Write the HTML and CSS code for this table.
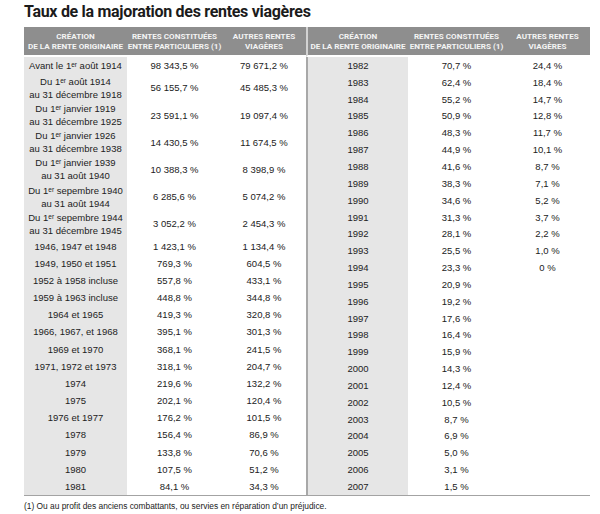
FILE: index.html
```html
<!DOCTYPE html>
<html lang="fr">
<head>
<meta charset="utf-8">
<link rel="stylesheet" href="styles.css">
</head>
<body>
<div class="page">
  <h1 class="title">Taux de la majoration des rentes viagères</h1>
  <div class="tables">
    <table class="tbl left">
      <colgroup><col class="w1"><col class="w2"><col class="w3"></colgroup>
      <thead>
        <tr><th>Création<br>de la rente originaire</th><th>Rentes constituées<br>entre particuliers (1)</th><th>Autres rentes<br>viagères</th></tr>
      </thead>
      <tbody>
        <tr class="s"><td class="c1">Avant le 1<span class="sup">er</span> août 1914</td><td>98 343,5 %</td><td>79 671,2 %</td></tr>
        <tr class="d"><td class="c1">Du 1<span class="sup">er</span> août 1914<br>au 31 décembre 1918</td><td>56 155,7 %</td><td>45 485,3 %</td></tr>
        <tr class="d"><td class="c1">Du 1<span class="sup">er</span> janvier 1919<br>au 31 décembre 1925</td><td>23 591,1 %</td><td>19 097,4 %</td></tr>
        <tr class="d"><td class="c1">Du 1<span class="sup">er</span> janvier 1926<br>au 31 décembre 1938</td><td>14 430,5 %</td><td>11 674,5 %</td></tr>
        <tr class="d"><td class="c1">Du 1<span class="sup">er</span> janvier 1939<br>au 31 août 1940</td><td>10 388,3 %</td><td>8 398,9 %</td></tr>
        <tr class="d"><td class="c1">Du 1<span class="sup">er</span> sepembre 1940<br>au 31 août 1944</td><td>6 285,6 %</td><td>5 074,2 %</td></tr>
        <tr class="d"><td class="c1">Du 1<span class="sup">er</span> sepembre 1944<br>au 31 décembre 1945</td><td>3 052,2 %</td><td>2 454,3 %</td></tr>
        <tr class="s"><td class="c1">1946, 1947 et 1948</td><td>1 423,1 %</td><td>1 134,4 %</td></tr>
        <tr class="s"><td class="c1">1949, 1950 et 1951</td><td>769,3 %</td><td>604,5 %</td></tr>
        <tr class="s"><td class="c1">1952 à 1958 incluse</td><td>557,8 %</td><td>433,1 %</td></tr>
        <tr class="s"><td class="c1">1959 à 1963 incluse</td><td>448,8 %</td><td>344,8 %</td></tr>
        <tr class="s"><td class="c1">1964 et 1965</td><td>419,3 %</td><td>320,8 %</td></tr>
        <tr class="s"><td class="c1">1966, 1967, et 1968</td><td>395,1 %</td><td>301,3 %</td></tr>
        <tr class="s"><td class="c1">1969 et 1970</td><td>368,1 %</td><td>241,5 %</td></tr>
        <tr class="s"><td class="c1">1971, 1972 et 1973</td><td>318,1 %</td><td>204,7 %</td></tr>
        <tr class="s"><td class="c1">1974</td><td>219,6 %</td><td>132,2 %</td></tr>
        <tr class="s"><td class="c1">1975</td><td>202,1 %</td><td>120,4 %</td></tr>
        <tr class="s"><td class="c1">1976 et 1977</td><td>176,2 %</td><td>101,5 %</td></tr>
        <tr class="s"><td class="c1">1978</td><td>156,4 %</td><td>86,9 %</td></tr>
        <tr class="s"><td class="c1">1979</td><td>133,8 %</td><td>70,6 %</td></tr>
        <tr class="s"><td class="c1">1980</td><td>107,5 %</td><td>51,2 %</td></tr>
        <tr class="s"><td class="c1">1981</td><td>84,1 %</td><td>34,3 %</td></tr>
      </tbody>
    </table>
    <table class="tbl right">
      <colgroup><col class="v1"><col class="v2"><col class="v3"></colgroup>
      <thead>
        <tr><th class="c1">Création<br>de la rente originaire</th><th>Rentes constituées<br>entre particuliers (1)</th><th>Autres rentes<br>viagères</th></tr>
      </thead>
      <tbody>
        <tr><td class="c1">1982</td><td>70,7 %</td><td>24,4 %</td></tr>
        <tr><td class="c1">1983</td><td>62,4 %</td><td>18,4 %</td></tr>
        <tr><td class="c1">1984</td><td>55,2 %</td><td>14,7 %</td></tr>
        <tr><td class="c1">1985</td><td>50,9 %</td><td>12,8 %</td></tr>
        <tr><td class="c1">1986</td><td>48,3 %</td><td>11,7 %</td></tr>
        <tr><td class="c1">1987</td><td>44,9 %</td><td>10,1 %</td></tr>
        <tr><td class="c1">1988</td><td>41,6 %</td><td>8,7 %</td></tr>
        <tr><td class="c1">1989</td><td>38,3 %</td><td>7,1 %</td></tr>
        <tr><td class="c1">1990</td><td>34,6 %</td><td>5,2 %</td></tr>
        <tr><td class="c1">1991</td><td>31,3 %</td><td>3,7 %</td></tr>
        <tr><td class="c1">1992</td><td>28,1 %</td><td>2,2 %</td></tr>
        <tr><td class="c1">1993</td><td>25,5 %</td><td>1,0 %</td></tr>
        <tr><td class="c1">1994</td><td>23,3 %</td><td>0 %</td></tr>
        <tr><td class="c1">1995</td><td>20,9 %</td><td></td></tr>
        <tr><td class="c1">1996</td><td>19,2 %</td><td></td></tr>
        <tr><td class="c1">1997</td><td>17,6 %</td><td></td></tr>
        <tr><td class="c1">1998</td><td>16,4 %</td><td></td></tr>
        <tr><td class="c1">1999</td><td>15,9 %</td><td></td></tr>
        <tr><td class="c1">2000</td><td>14,3 %</td><td></td></tr>
        <tr><td class="c1">2001</td><td>12,4 %</td><td></td></tr>
        <tr><td class="c1">2002</td><td>10,5 %</td><td></td></tr>
        <tr><td class="c1">2003</td><td>8,7 %</td><td></td></tr>
        <tr><td class="c1">2004</td><td>6,9 %</td><td></td></tr>
        <tr><td class="c1">2005</td><td>5,0 %</td><td></td></tr>
        <tr><td class="c1">2006</td><td>3,1 %</td><td></td></tr>
        <tr><td class="c1">2007</td><td>1,5 %</td><td></td></tr>
      </tbody>
    </table>
  </div>
  <p class="note">(1) Ou au profit des anciens combattants, ou servies en réparation d’un préjudice.</p>
</div>
</body>
</html>
```

FILE: styles.css
```css
html, body {
  margin: 0;
  padding: 0;
  background: #ffffff;
}

.page {
  width: 566px;
  padding: 2px 0 0 24px;
  font-family: "Liberation Sans", Arial, sans-serif;
  color: #222222;
}

.title {
  margin: 0 0 5px 0;
  font-family: Roboto, "Liberation Sans", sans-serif;
  font-weight: 700;
  font-size: 16px;
  line-height: 20px;
  letter-spacing: -0.3px;
  color: #1b1b1b;
}

.tables {
  display: flex;
  border-bottom: 1px solid #a3a3a3;
}

.tbl {
  table-layout: fixed;
  border-collapse: separate;
  border-spacing: 0;
  height: 468px;
}

.tbl.left { width: 282px; }
.tbl.right { width: 284px; }

.w1 { width: 103px; }
.w2 { width: 95px; }
.w3 { width: 84px; }

.v1 { width: 102px; }
.v2 { width: 97px; }
.v3 { width: 85px; }

.tbl th {
  height: 28px;
  padding: 0;
  background: #8e8e8e;
  color: #f4f4f4;
  font-family: Roboto, "Liberation Sans", sans-serif;
  font-weight: 700;
  font-size: 8.1px;
  line-height: 10px;
  text-transform: uppercase;
  text-align: center;
  vertical-align: middle;
  border-bottom: 2px solid #ffffff;
}

.tbl td {
  padding: 0;
  font-size: 9.5px;
  line-height: 13px;
  text-align: center;
  vertical-align: middle;
  color: #222222;
  white-space: nowrap;
}

.tbl.right td { height: 16px; }
.tbl.left tr.s td { height: 17px; }
.tbl.left tr.d td { height: 27px; }

.tbl td.c1 {
  background: #e6e6e6;
}

.tbl.right th.c1 {
  border-left: 2px solid #d2d2d2;
}

.tbl.right td.c1 {
  border-left: 2px solid #a8a8a8;
}

.sup {
  font-size: 6.5px;
  vertical-align: 2.5px;
  line-height: 0;
}

.note {
  margin: 5px 0 0 0;
  font-size: 8.4px;
  line-height: 10px;
  color: #222222;
}
```
